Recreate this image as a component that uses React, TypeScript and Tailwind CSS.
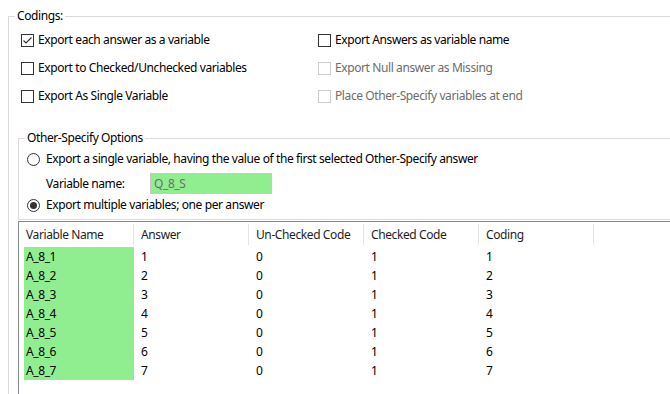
import React from 'react';

const font = { fontFamily: '"Noto Sans", "Segoe UI", sans-serif' };

function CheckBox({ checked = false, disabled = false }: { checked?: boolean; disabled?: boolean }) {
  return (
    <span
      className={`w-[13px] h-[13px] shrink-0 border flex items-center justify-center bg-white ${
        disabled ? 'border-[#cccccc]' : 'border-[#333333]'
      }`}
    >
      {checked && (
        <svg width="11" height="11" viewBox="0 0 11 11">
          <path d="M1.5 5.5 L4 8 L9.5 2.5" fill="none" stroke="#333333" strokeWidth="1.2" />
        </svg>
      )}
    </span>
  );
}

function Option({ label, checked, disabled }: { label: string; checked?: boolean; disabled?: boolean }) {
  return (
    <label className="flex items-center h-[16px] gap-[4px]">
      <CheckBox checked={checked} disabled={disabled} />
      <span className={disabled ? 'text-[#6d6d6d]' : 'text-black'}>{label}</span>
    </label>
  );
}

function Radio({ checked = false }: { checked?: boolean }) {
  return (
    <span className="w-[13px] h-[13px] shrink-0 rounded-full border border-[#333333] flex items-center justify-center bg-white">
      {checked && <span className="w-[7px] h-[7px] rounded-full bg-[#333333]" />}
    </span>
  );
}

const columns = ['Variable Name', 'Answer', 'Un-Checked Code', 'Checked Code', 'Coding'];

const rows = [1, 2, 3, 4, 5, 6, 7].map((n) => ({
  name: `A_8_${n}`,
  answer: String(n),
  unchecked: '0',
  checked: '1',
  coding: String(n),
}));

export default function App() {
  return (
    <div
      className="w-[670px] h-[394px] bg-white overflow-hidden text-[12px] leading-[16px] tracking-[-0.4px] text-black"
      style={font}
    >
      {/* Codings group */}
      <fieldset className="mt-[8px] ml-[8px] w-[700px] h-[420px] border-l border-t border-[#dcdcdc]">
        <legend className="ml-[6px] px-[2px] h-[16px]">Codings:</legend>

        <div className="grid grid-cols-[297px_1fr] gap-y-[12px] pl-[12px] pt-[8px]">
          <Option label="Export each answer as a variable" checked />
          <Option label="Export Answers as variable name" />
          <Option label="Export to Checked/Unchecked variables" />
          <Option label="Export Null answer as Missing" disabled />
          <Option label="Export As Single Variable" />
          <Option label="Place Other-Specify variables at end" disabled />
        </div>

        {/* Other-Specify group */}
        <fieldset className="mt-[26px] ml-[9px] w-[700px] border-l border-t border-b border-[#dcdcdc]">
          <legend className="ml-[6px] px-[2px] h-[16px]">Other-Specify Options</legend>
          <div className="flex flex-col pl-[8px] pt-[5px] pb-[6px]">
            <label className="flex items-center h-[16px] gap-[6px]">
              <Radio />
              <span>Export a single variable, having the value of the first selected Other-Specify answer</span>
            </label>
            <div className="flex items-center h-[21px] mt-[6px]">
              <span className="w-[123px] pl-[19px]">Variable name:</span>
              <div className="w-[122px] h-[21px] border border-[#c8c8c8] bg-[#90ee90] px-[3px] flex items-center text-[#6d6d6d]">
                Q_8_S
              </div>
            </div>
            <label className="flex items-center h-[16px] gap-[6px] mt-[3px]">
              <Radio checked />
              <span>Export multiple variables; one per answer</span>
            </label>
          </div>
        </fieldset>

        {/* Answers list */}
        <div className="mt-[1px] ml-[9px] w-[700px] h-[200px] border-l border-t border-[#828790]">
          <div className="flex h-[25px] items-stretch">
            {columns.map((c) => (
              <div key={c} className="flex items-center w-[115px] border-r border-[#e5e5e5] my-[2px] pl-[7px]">
                <span className="text-[#1e1e1e]">{c}</span>
              </div>
            ))}
          </div>
          <div className="flex flex-col">
            {rows.map((r) => (
              <div key={r.name} className="flex h-[19px] items-center">
                <div className="w-[115px] pl-[5px] h-full">
                  <div className="h-full bg-[#90ee90] pl-[2px] flex items-center">{r.name}</div>
                </div>
                <div className="w-[115px] pl-[7px]">{r.answer}</div>
                <div className="w-[115px] pl-[7px]">{r.unchecked}</div>
                <div className="w-[115px] pl-[7px]">{r.checked}</div>
                <div className="w-[115px] pl-[7px]">{r.coding}</div>
              </div>
            ))}
          </div>
        </div>
      </fieldset>
    </div>
  );
}
